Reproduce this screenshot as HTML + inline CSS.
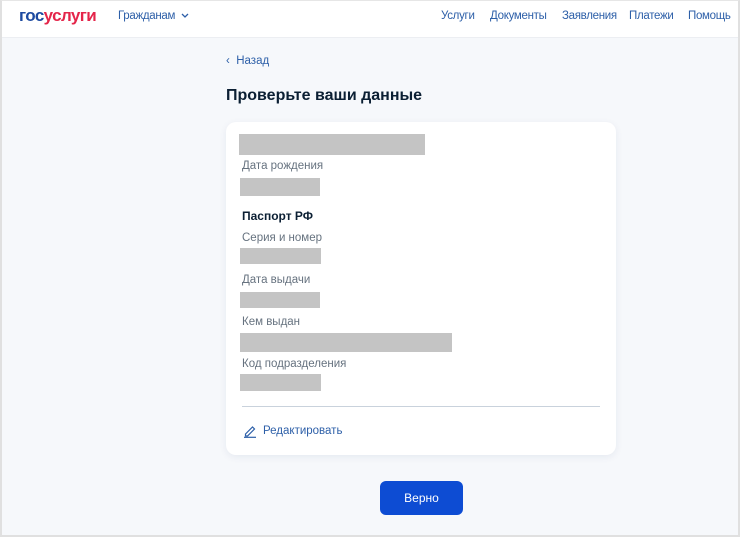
<!DOCTYPE html>
<html><head><meta charset="utf-8"><style>
*{margin:0;padding:0;box-sizing:border-box}
body{width:740px;height:537px;overflow:hidden;background:#f6f8fb;font-family:"Liberation Sans",sans-serif;position:relative}
.frame{position:absolute;left:0;top:0;width:740px;height:537px;border:2px solid #e0e0e0;border-top:1px solid #e6e6e6}
.hdr{position:absolute;left:1px;top:1px;width:737px;height:37px;background:#fff;border-bottom:1px solid #eceef2}
.a{position:absolute;font-size:11.5px;color:#2d5fa8;white-space:nowrap}
.n{letter-spacing:-0.3px}
.t{position:absolute;white-space:nowrap}
.g{position:absolute;background:#c4c4c4}
.l{position:absolute;font-size:11.5px;color:#66727f}
</style></head><body>
<div class="hdr"></div>
<div class="t" style="left:19px;top:6px;font-size:17px;font-weight:bold;letter-spacing:-0.6px"><span style="color:#1d4aa0">гос</span><span style="color:#e4254a">услуги</span></div>
<div class="a n" style="left:118px;top:10px">Гражданам <svg width="8" height="6" viewBox="0 0 8 6" style="margin-left:3px"><path d="M1 1l3 3 3-3" fill="none" stroke="#2d5fa8" stroke-width="1.3"/></svg></div>
<div class="a n" style="left:441px;top:10px">Услуги</div>
<div class="a n" style="left:490px;top:10px">Документы</div>
<div class="a n" style="left:562px;top:10px">Заявления</div>
<div class="a n" style="left:629px;top:10px">Платежи</div>
<div class="a n" style="left:688px;top:10px">Помощь</div>
<div class="a" style="left:226px;top:55px">‹&nbsp; Назад</div>
<div class="t" style="left:226px;top:87px;font-size:16px;font-weight:bold;color:#0b1f33">Проверьте ваши данные</div>
<div style="position:absolute;left:226px;top:122px;width:390px;height:333px;background:#fff;border-radius:10px;box-shadow:0 2px 8px rgba(0,40,100,0.07)"></div>
<div class="g" style="left:239px;top:134px;width:186px;height:21px"></div>
<div class="l" style="left:242px;top:160px">Дата рождения</div>
<div class="g" style="left:240px;top:178px;width:80px;height:18px"></div>
<div class="t" style="left:242px;top:209px;font-size:12px;font-weight:bold;color:#0b1f33">Паспорт РФ</div>
<div class="l" style="left:242px;top:232px">Серия и номер</div>
<div class="g" style="left:240px;top:248px;width:81px;height:16px"></div>
<div class="l" style="left:242px;top:274px">Дата выдачи</div>
<div class="g" style="left:240px;top:292px;width:80px;height:16px"></div>
<div class="l" style="left:242px;top:316px">Кем выдан</div>
<div class="g" style="left:240px;top:333px;width:212px;height:19px"></div>
<div class="l" style="left:242px;top:358px">Код подразделения</div>
<div class="g" style="left:240px;top:374px;width:81px;height:17px"></div>
<div style="position:absolute;left:242px;top:406px;width:358px;height:1px;background:#c9d2dc"></div>
<svg style="position:absolute;left:243px;top:424px" width="14" height="14" viewBox="0 0 14 14"><path d="M2.5 10l7-7 2 2-7 7H2.5z" fill="none" stroke="#2d5fa8" stroke-width="1.2"/><path d="M1 13.3h12" stroke="#2d5fa8" stroke-width="1.2"/></svg>
<div class="a" style="left:263px;top:425px">Редактировать</div>
<div style="position:absolute;left:380px;top:481px;width:83px;height:34px;background:#0d4cd3;border-radius:6px;color:#fff;font-size:12px;text-align:center;line-height:34px">Верно</div>
<div class="frame"></div>
</body></html>
